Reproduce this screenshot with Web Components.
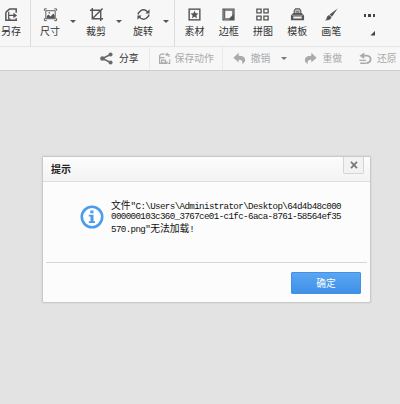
<!DOCTYPE html>
<html lang="zh-CN">
<head>
<meta charset="utf-8">
<title>提示</title>
<style>
html,body{margin:0;width:400px;height:404px;overflow:hidden}
body{background:#e3e3e3;font-family:"Noto Sans CJK SC","Liberation Sans",sans-serif;color:#3c3c3c}
</style>
</head>
<body>
<editor-app></editor-app>
<script>
const define=(name,html)=>customElements.define(name,class extends HTMLElement{
  constructor(){super();this.attachShadow({mode:'open'}).innerHTML=html(this)}
});

const icons={
save:'<path d="M2 5.500 6 2h7v4M2 5.500V14h11v-2" fill="none" stroke="currentColor" stroke-width="1.600"/><path d="M5 9h6M5 5v8h2" fill="none" stroke="currentColor" stroke-width="1.300"/><path d="m10 6 4 3-4 3z"/>',
size:'<rect x="3" y="4" width="10" height="8.500" fill="none" stroke="currentColor"/><path d="M4 12V9.500L6 8l2 2 3-3 1.500 2v3zM6 5.500h1.500V7H6z"/><path d="M1.500 4V2H4M12 2h2.500v2M1.500 12v2.500H4M12 14.500h2.500V12" fill="none" stroke="currentColor"/>',
crop:'<path d="M3.500 1v11.500H15M1 3.500h11.500V15M4 12 14.500 1.500" fill="none" stroke="currentColor" stroke-width="1.500"/>',
rotate:'<path d="M2.500 8V6.500L5 4Q8 2 11 4l2 2M13.500 8v1.500L11 12q-3 2-6 0l-2-2" fill="none" stroke="currentColor" stroke-width="1.600"/><path d="M14.500 2.500V7H10zM1.500 13.500V9H6z"/>',
star:'<rect x="2.300" y="2.300" width="11.400" height="11.400" fill="none" stroke="currentColor" stroke-width="1.500"/><path d="m8 4 1.200 2.700 3 .3L10 9l.7 3L8 10.500 5.300 12 6 9 3.800 7l3-.3z"/>',
frame:'<path fill-rule="evenodd" d="M1.500 1.500h13v13h-13zM4.500 4v8H9l3-3V4z"/><path d="M3 3v10h6M4 3h9v5" fill="none" stroke="#bbb" stroke-width=".6"/>',
grid:'<path d="M2 2.200h4.500v4H2zM9.500 2.200H14v4H9.500zM2 9.800h4.500v4H2zM9.500 9.800H14v4H9.500z" fill="none" stroke="currentColor" stroke-width="1.400"/>',
template:'<path d="M4.500 7V4L6 2h4l1.500 2v3" fill="#ddd" stroke="currentColor" stroke-width="1.200"/><path d="M6 4.500h4M6 6.300h4" stroke="currentColor"/><path fill-rule="evenodd" d="M3.500 6.500h9L15 9v5H1V9zM3.500 10v2.200h9V10z"/><path d="M2 8.800h12" stroke="#bbb" stroke-width=".7"/>',
brush:'<path d="M14.500 1.500 8.500 10.500 6 8Zm-9 7 2.500 2.500Q7 14.500 1 14.500q2-1 2-3.500 .3-1.800 2.500-2.500"/>',
share:'<path d="M13 3 3 8l10 5" fill="none" stroke="currentColor" stroke-width="2"/><circle cx="13" cy="3" r="2.500"/><circle cx="3" cy="8" r="2.800"/><circle cx="13" cy="13" r="2.500"/>',
action:'<path d="M8 2.500H4L2 4.500V14h9v-2.500M2 7h6M4.500 10h4.500v3.500h-4.500z" fill="none" stroke="currentColor" stroke-width="1.500"/><path d="M11.500 3h2v3M14.500 9v5h-2" fill="none" stroke="currentColor" stroke-width="1.300"/><path d="M8.500 3 12 .5v5z"/>',
undo:'<path d="M7 1v3.500q8 0 8 5.500 0 3-3.500 5 1-5.500-4.500-5.500V13L.5 7z"/>',
redo:'<path d="M9 1v3.500Q1 4.500 1 10q0 3 3.500 5-1-5.500 4.500-5.500V13l6.500-6z"/>',
restore:'<path d="M5 4.500h4.500Q14.300 5 14.300 9T9 13.800" fill="none" stroke="currentColor" stroke-width="2.300"/><path d="M6.500 .5v8L.5 4.500zM.5 9.500h8v1.700h-8zM1.500 13h7v1.700h-7z"/>'
};
define('app-icon',e=>`<style>:host{display:block;width:15px;height:15px}svg{display:block;width:100%;height:100%}</style><svg viewBox="0 0 16 16" fill="currentColor">${icons[e.getAttribute('name')]}</svg>`);

define('tool-button',e=>`<style>:host{display:flex;flex-direction:column;align-items:center;flex:none;width:38px;color:#555}
app-icon{margin-top:7px}span{font-size:10px;line-height:14px;margin-top:2px;color:#333;white-space:nowrap}</style>
<app-icon name="${e.getAttribute('icon')}"></app-icon><span><slot></slot></span>`);

define('drop-arrow',()=>`<style>:host{display:flex;flex:none;width:8px;align-items:center;justify-content:center;color:#555}
i{border:3px solid transparent;border-top-color:currentColor;border-bottom:0}</style><i></i>`);

define('tool-divider',()=>`<style>:host{display:block;flex:none;width:1px;background:#dcdcdc}</style>`);

define('more-button',()=>`<style>:host{display:flex;flex-direction:column;align-items:flex-end;width:27px;padding-top:14px}
b{display:flex;gap:2px}b i{width:2.500px;height:2.500px;background:#444}
u{width:5px;height:5px;margin-top:14px;background:#444;clip-path:polygon(100% 0,100% 100%,0 100%)}</style><b><i></i><i></i><i></i></b><u></u>`);

define('main-toolbar',()=>`<style>:host{display:flex;height:46px;background:#f7f7f7;border-bottom:1px solid #e4e4e4}
.first{margin-left:-8px}drop-arrow{height:42px}.n{width:34.200px}
.b{margin:0 2.500px 0 4px}</style>
<tool-button class="first" icon="save">另存</tool-button><tool-divider></tool-divider>
<tool-button icon="size">尺寸</tool-button><drop-arrow></drop-arrow>
<tool-button icon="crop">裁剪</tool-button><drop-arrow></drop-arrow>
<tool-button icon="rotate" style="margin-left:1px">旋转</tool-button><drop-arrow></drop-arrow>
<tool-divider class="b"></tool-divider>
<tool-button class="n" icon="star">素材</tool-button><tool-button class="n" icon="frame">边框</tool-button>
<tool-button class="n" icon="grid">拼图</tool-button><tool-button class="n" icon="template">模板</tool-button>
<tool-button class="n" icon="brush">画笔</tool-button><more-button></more-button>`);

define('action-link',e=>`<style>:host{display:flex;flex:none;align-items:center;gap:6px;height:22px;color:#aaa;font-size:9.800px;line-height:14px;white-space:nowrap}
:host([active]){color:#333}app-icon{width:13px;height:13px}:host([active]) app-icon{color:#6a6a6a}</style>
<app-icon name="${e.getAttribute('icon')}"></app-icon><span><slot></slot></span>`);

define('action-bar',()=>`<style>:host{display:flex;height:22.500px;padding-left:100px;background:#f7f7f7;border-bottom:1.500px solid #cfcfcf;overflow:hidden}
tool-divider{background:#eaeaea}</style>
<action-link icon="share" active>分享</action-link><tool-divider style="margin:0 8px 0 10px"></tool-divider>
<action-link icon="action" style="gap:4px">保存动作</action-link><tool-divider style="margin:0 10px 0 8px"></tool-divider>
<action-link icon="undo" style="gap:5px">撤销</action-link><drop-arrow style="margin:0 16px 0 10px;color:#777"></drop-arrow>
<action-link icon="redo" style="gap:5px">重做</action-link>
<action-link icon="restore" style="margin-left:17px;gap:5px">还原</action-link>`);

define('info-icon',()=>`<style>:host{display:block;flex:none;width:24px;height:24px}svg{display:block}</style>
<svg width="24" height="24" viewBox="0 0 24 24"><circle cx="12" cy="12" r="10.200" fill="#fff" stroke="#4b9ceb" stroke-width="2.600"/><path fill="#4b9ceb" d="M10.300 5.500h3.200v2.700h-3.200zM8.800 9.800h4.700v6.400H15V18H8.800v-1.800h1.700v-4.600H8.800z"/></svg>`);

define('close-button',()=>`<style>:host{display:flex;align-items:center;justify-content:center;box-sizing:border-box;width:21px;height:17px;background:#f2f2f2;border:1px solid #d4d4d4;border-top:0;border-radius:0 0 2px 2px}</style>
<svg width="8" height="8" viewBox="0 0 8 8"><path d="m1 .8 6 6.400M7 .8 1 7.200" stroke="#777" stroke-width="1.700"/></svg>`);

define('primary-button',()=>`<style>:host{display:flex;align-items:center;justify-content:center;box-sizing:border-box;width:70px;height:22px;border:1px solid #4590e2;border-radius:1px;background:linear-gradient(#5aa6f3,#4090e8);color:#fff;font-size:9.700px;line-height:14px}</style><slot></slot>`);

define('message-dialog',()=>`<style>:host{display:flex;flex-direction:column;box-sizing:border-box;width:329px;height:147px;background:#fcfcfc;border:1px solid #c9c9c9;border-radius:2px;box-shadow:0 0 1px 1px #dadada}
header{display:flex;justify-content:space-between;box-sizing:border-box;height:25px;padding:0 6px 0 8px;background:linear-gradient(#fcfcfc,#f3f3f3);border-bottom:1px solid #dfdfdf}
h1{margin:0;font-size:10px;line-height:23px;font-weight:700;color:#222}
main{display:flex;box-sizing:border-box;height:80px;padding:23px 0 0 37px;gap:7px}
footer{display:flex;justify-content:flex-end;margin:0 3px;padding:9px 6px 0 0;border-top:1.500px solid #d6d6d6}</style>
<header><h1><slot name="title"></slot></h1><close-button></close-button></header>
<main><info-icon></info-icon><slot></slot></main>
<footer><primary-button><slot name="confirm"></slot></primary-button></footer>`);

define('path-message',()=>`<style>:host{display:block;margin-top:-5px;font:9.200px/11.500px "Liberation Mono","Noto Sans CJK SC",monospace;letter-spacing:-.62px;color:#111;white-space:nowrap}
div{height:11.500px}span{font:9.800px/11.500px "Noto Sans CJK SC",sans-serif;letter-spacing:0}</style>
<div><span>文件</span>"C:\\Users\\Administrator\\Desktop\\64d4b48c000</div><div>000000103c360_3767ce01-c1fc-6aca-8761-58564ef35</div><div>570.png"<span>无法加载</span>!</div>`);

define('editor-app',()=>`<style>:host{display:flex;flex-direction:column;width:400px;height:404px;background:#e3e3e3}
section{display:flex;padding:85px 0 0 42px}</style>
<main-toolbar></main-toolbar><action-bar></action-bar>
<section><message-dialog><span slot="title">提示</span><path-message></path-message><span slot="confirm">确定</span></message-dialog></section>`);
</script>
</body>
</html>
